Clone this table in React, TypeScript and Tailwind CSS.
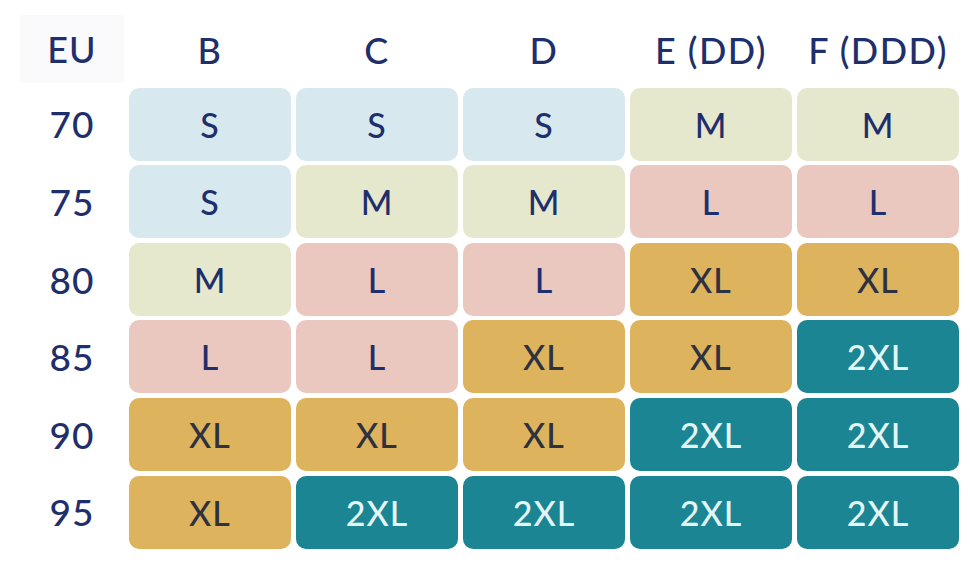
const cols = ['B', 'C', 'D', 'E (DD)', 'F (DDD)']

type Size = 'S' | 'M' | 'L' | 'XL' | '2XL'

const rows: { band: string; sizes: Size[] }[] = [
  { band: '70', sizes: ['S', 'S', 'S', 'M', 'M'] },
  { band: '75', sizes: ['S', 'M', 'M', 'L', 'L'] },
  { band: '80', sizes: ['M', 'L', 'L', 'XL', 'XL'] },
  { band: '85', sizes: ['L', 'L', 'XL', 'XL', '2XL'] },
  { band: '90', sizes: ['XL', 'XL', 'XL', '2XL', '2XL'] },
  { band: '95', sizes: ['XL', '2XL', '2XL', '2XL', '2XL'] },
]

const cellStyle: Record<Size, string> = {
  S: 'bg-[#d7e8ee] text-[#1f2f6b]',
  M: 'bg-[#e6e8cd] text-[#1f2f6b]',
  L: 'bg-[#eac8c0] text-[#1f2f6b]',
  XL: 'bg-[#ddb35d] text-[#2d3140]',
  '2XL': 'bg-[#1b8593] text-[#e4f5f5]',
}

export default function App() {
  return (
    <div
      className="w-[970px] h-[569px] bg-white overflow-hidden"
      style={{ fontFamily: 'Lato, "Open Sans", sans-serif' }}
    >
      <div className="grid grid-cols-[124px_repeat(5,162px)] gap-x-[5px] gap-y-[4.6px] grid-rows-[83px_repeat(6,73px)]">
        {/* header */}
        <div className="pl-[20px] pt-[15px] pr-0 pb-0">
          <div className="h-full bg-[#faf9fb] flex items-center justify-center text-[#1f2f6b] text-[36px] font-medium tracking-[0.03em]">
            EU
          </div>
        </div>
        {cols.map((c) => (
          <div
            key={c}
            className="flex items-center justify-center pt-[16px] text-[#1f2f6b] text-[36px] font-medium tracking-[0.04em]"
          >
            {c}
          </div>
        ))}

        {rows.map((r) => (
          <>
            <div
              key={r.band}
              className="pl-[20px] flex items-center justify-center text-[#1f2f6b] text-[37px] font-medium tracking-[0.03em]"
            >
              {r.band}
            </div>
            {r.sizes.map((s, i) => (
              <div
                key={r.band + i}
                className={`rounded-[10px] flex items-center justify-center text-[34px] font-medium tracking-[0.03em] ${cellStyle[s]}`}
              >
                {s}
              </div>
            ))}
          </>
        ))}
      </div>
    </div>
  )
}
